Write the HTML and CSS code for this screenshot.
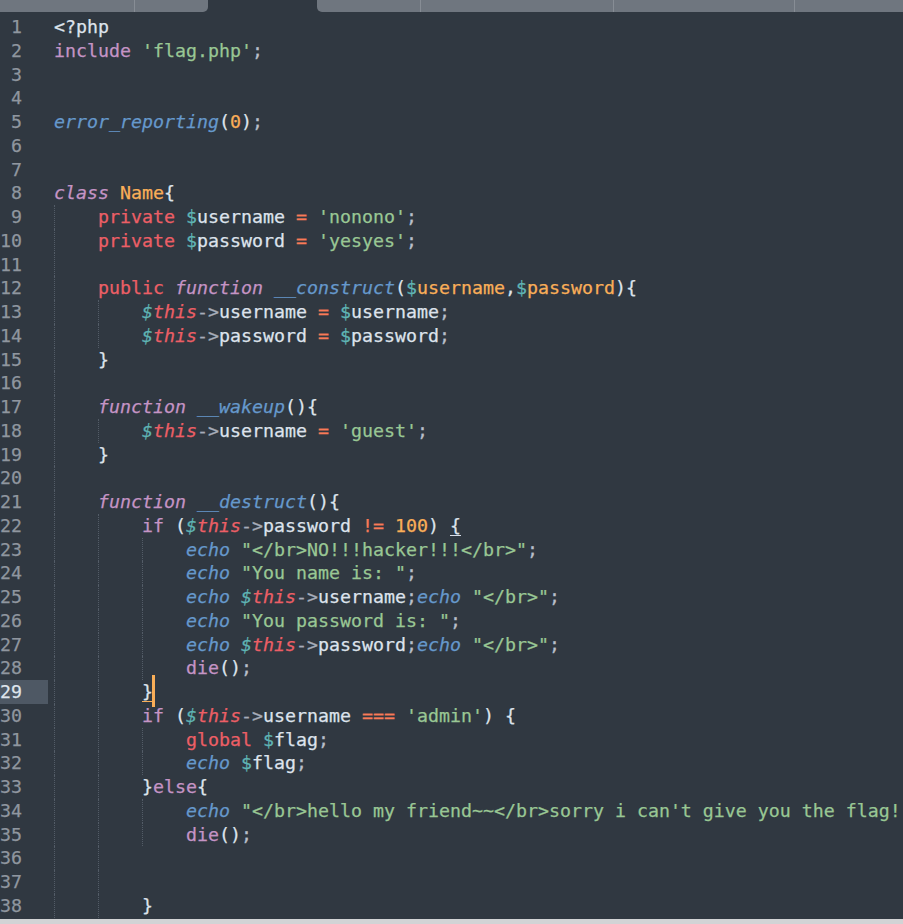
FILE: index.html
```html
<!DOCTYPE html>
<html lang="en">
<head>
    <meta charset="UTF-8">
    <meta name="viewport" content="width=device-width, initial-scale=1.0">
    <title>index.php</title>
    <link rel="stylesheet" href="styles.css">
</head>
<body>
    <div class="window">
        <div class="tabs">
            <div class="tab" style="width: 134px"></div>
            <div class="tab sep before" style="width: 74px"></div>
            <div class="tab active" style="width: 109px"></div>
            <div class="tab after" style="width: 103px"></div>
            <div class="tab sep" style="width: 193px"></div>
            <div class="tab sep" style="width: 181px"></div>
            <div class="tab sep grow"></div>
        </div>

        <div class="editor">
            <div class="ln"><span class="num">1</span><span class="code"><span class="w">&lt;?php</span></span></div>
            <div class="ln"><span class="num">2</span><span class="code"><span class="k">include</span> <span class="s">'flag.php'</span><span class="p">;</span></span></div>
            <div class="ln"><span class="num">3</span><span class="code"></span></div>
            <div class="ln"><span class="num">4</span><span class="code"></span></div>
            <div class="ln"><span class="num">5</span><span class="code"><span class="f">error_reporting</span><span class="w">(</span><span class="n">0</span><span class="w">)</span><span class="p">;</span></span></div>
            <div class="ln"><span class="num">6</span><span class="code"></span></div>
            <div class="ln"><span class="num">7</span><span class="code"></span></div>
            <div class="ln"><span class="num">8</span><span class="code"><span class="k i">class</span> <span class="n">Name</span><span class="w">{</span></span></div>
            <div class="ln"><span class="num">9</span><span class="code"><i class="g"></i><span class="r">private</span> <span class="d">$</span><span class="w">username</span> <span class="o">=</span> <span class="s">'nonono'</span><span class="p">;</span></span></div>
            <div class="ln"><span class="num">10</span><span class="code"><i class="g"></i><span class="r">private</span> <span class="d">$</span><span class="w">password</span> <span class="o">=</span> <span class="s">'yesyes'</span><span class="p">;</span></span></div>
            <div class="ln"><span class="num">11</span><span class="code"><i class="g"></i></span></div>
            <div class="ln"><span class="num">12</span><span class="code"><i class="g"></i><span class="r">public</span> <span class="k i">function</span> <span class="f">__construct</span><span class="w">(</span><span class="d">$</span><span class="n">username</span><span class="w">,</span><span class="d">$</span><span class="n">password</span><span class="w">){</span></span></div>
            <div class="ln"><span class="num">13</span><span class="code"><i class="g"></i><i class="g"></i><span class="d i">$</span><span class="r i">this</span><span class="a">-&gt;</span><span class="w">username</span> <span class="o">=</span> <span class="d">$</span><span class="w">username</span><span class="p">;</span></span></div>
            <div class="ln"><span class="num">14</span><span class="code"><i class="g"></i><i class="g"></i><span class="d i">$</span><span class="r i">this</span><span class="a">-&gt;</span><span class="w">password</span> <span class="o">=</span> <span class="d">$</span><span class="w">password</span><span class="p">;</span></span></div>
            <div class="ln"><span class="num">15</span><span class="code"><i class="g"></i><span class="w">}</span></span></div>
            <div class="ln"><span class="num">16</span><span class="code"><i class="g"></i></span></div>
            <div class="ln"><span class="num">17</span><span class="code"><i class="g"></i><span class="k i">function</span> <span class="f">__wakeup</span><span class="w">(){</span></span></div>
            <div class="ln"><span class="num">18</span><span class="code"><i class="g"></i><i class="g"></i><span class="d i">$</span><span class="r i">this</span><span class="a">-&gt;</span><span class="w">username</span> <span class="o">=</span> <span class="s">'guest'</span><span class="p">;</span></span></div>
            <div class="ln"><span class="num">19</span><span class="code"><i class="g"></i><span class="w">}</span></span></div>
            <div class="ln"><span class="num">20</span><span class="code"><i class="g"></i></span></div>
            <div class="ln"><span class="num">21</span><span class="code"><i class="g"></i><span class="k i">function</span> <span class="f">__destruct</span><span class="w">(){</span></span></div>
            <div class="ln"><span class="num">22</span><span class="code"><i class="g"></i><i class="g"></i><span class="k">if</span> <span class="w">(</span><span class="d i">$</span><span class="r i">this</span><span class="a">-&gt;</span><span class="w">password</span> <span class="o">!=</span> <span class="n">100</span><span class="w">)</span> <span class="w match">{</span></span></div>
            <div class="ln"><span class="num">23</span><span class="code"><i class="g"></i><i class="g"></i><i class="g"></i><span class="f">echo</span> <span class="s">"&lt;/br&gt;NO!!!hacker!!!&lt;/br&gt;"</span><span class="p">;</span></span></div>
            <div class="ln"><span class="num">24</span><span class="code"><i class="g"></i><i class="g"></i><i class="g"></i><span class="f">echo</span> <span class="s">"You name is: "</span><span class="p">;</span></span></div>
            <div class="ln"><span class="num">25</span><span class="code"><i class="g"></i><i class="g"></i><i class="g"></i><span class="f">echo</span> <span class="d i">$</span><span class="r i">this</span><span class="a">-&gt;</span><span class="w">username</span><span class="p">;</span><span class="f">echo</span> <span class="s">"&lt;/br&gt;"</span><span class="p">;</span></span></div>
            <div class="ln"><span class="num">26</span><span class="code"><i class="g"></i><i class="g"></i><i class="g"></i><span class="f">echo</span> <span class="s">"You password is: "</span><span class="p">;</span></span></div>
            <div class="ln"><span class="num">27</span><span class="code"><i class="g"></i><i class="g"></i><i class="g"></i><span class="f">echo</span> <span class="d i">$</span><span class="r i">this</span><span class="a">-&gt;</span><span class="w">password</span><span class="p">;</span><span class="f">echo</span> <span class="s">"&lt;/br&gt;"</span><span class="p">;</span></span></div>
            <div class="ln"><span class="num">28</span><span class="code"><i class="g"></i><i class="g"></i><i class="g"></i><span class="k">die</span><span class="w">()</span><span class="p">;</span></span></div>
            <div class="ln current"><span class="num">29</span><span class="code"><i class="g"></i><i class="g"></i><span class="w match caret-match">}</span><span class="caret"></span></span></div>
            <div class="ln"><span class="num">30</span><span class="code"><i class="g"></i><i class="g"></i><span class="k">if</span> <span class="w">(</span><span class="d i">$</span><span class="r i">this</span><span class="a">-&gt;</span><span class="w">username</span> <span class="o">===</span> <span class="s">'admin'</span><span class="w">)</span> <span class="w">{</span></span></div>
            <div class="ln"><span class="num">31</span><span class="code"><i class="g"></i><i class="g"></i><i class="g"></i><span class="r">global</span> <span class="d">$</span><span class="w">flag</span><span class="p">;</span></span></div>
            <div class="ln"><span class="num">32</span><span class="code"><i class="g"></i><i class="g"></i><i class="g"></i><span class="f">echo</span> <span class="d">$</span><span class="w">flag</span><span class="p">;</span></span></div>
            <div class="ln"><span class="num">33</span><span class="code"><i class="g"></i><i class="g"></i><span class="w">}</span><span class="k">else</span><span class="w">{</span></span></div>
            <div class="ln"><span class="num">34</span><span class="code"><i class="g"></i><i class="g"></i><i class="g"></i><span class="f">echo</span> <span class="s">"&lt;/br&gt;hello my friend~~&lt;/br&gt;sorry i can't give you the flag!</span></span></div>
            <div class="ln"><span class="num">35</span><span class="code"><i class="g"></i><i class="g"></i><i class="g"></i><span class="k">die</span><span class="w">()</span><span class="p">;</span></span></div>
            <div class="ln"><span class="num">36</span><span class="code"><i class="g"></i><i class="g"></i></span></div>
            <div class="ln"><span class="num">37</span><span class="code"><i class="g"></i><i class="g"></i></span></div>
            <div class="ln"><span class="num">38</span><span class="code"><i class="g"></i><i class="g"></i><span class="w">}</span></span></div>
        </div>

        <div class="hscroll"></div>
    </div>
</body>
</html>
```

FILE: styles.css
```css
* {
    margin: 0;
    padding: 0;
    box-sizing: border-box;
}

body {
    background: #303841;
    width: 903px;
    height: 924px;
    overflow: hidden;
}

.window {
    height: 924px;
    display: flex;
    flex-direction: column;
    background: #303841;
}

/* tab strip */
.tabs {
    display: flex;
    height: 12px;
    flex-shrink: 0;
}

.tab {
    background: #6f767f;
    height: 100%;
}

.tab.sep {
    border-left: 1px solid #878d95;
}

.tab.grow {
    flex: 1;
}

.tab.before {
    border-bottom-right-radius: 5px;
}

.tab.after {
    border-bottom-left-radius: 5px;
}

.tab.active {
    background: #303841;
}

/* editor */
.editor {
    flex: 1;
    padding-top: 3px;
    font-family: "DejaVu Sans Mono", "Liberation Mono", monospace;
    font-size: 18.27px;
    color: #d8dee9;
    -webkit-text-stroke: 0.25px currentColor;
    overflow: hidden;
}

.ln {
    display: flex;
    height: 23.75px;
    line-height: 23.75px;
    white-space: pre;
}

.num {
    width: 48px;
    flex-shrink: 0;
    padding-right: 26px;
    text-align: right;
    color: #8f969f;
}

.ln.current .num {
    background: #4e5864;
    color: #dfe4ec;
}

.code {
    margin-left: 6px;
    white-space: pre;
}

/* indent guides */
.g {
    display: inline-block;
    width: 44px;
    height: 23.75px;
    vertical-align: top;
    border-left: 1px dotted #535c67;
}

/* syntax colours */
.w { color: #dde3ec; }
.p { color: #b8bfca; }
.a { color: #a6acb9; }
.k { color: #c594c5; }
.r { color: #ec5f66; }
.f { color: #6699cc; font-style: italic; }
.s { color: #99c794; }
.n { color: #f9ae58; }
.o { color: #f97b58; }
.d { color: #5fb4b4; }
.i { font-style: italic; }

.match {
    box-shadow: inset 0 -1px #d8dee9;
}

.caret-match {
    box-shadow: inset 0 -1px #f9ae58;
}

.caret {
    display: inline-block;
    width: 0;
    height: 23.75px;
    vertical-align: top;
    position: relative;
}

.caret::after {
    content: "";
    position: absolute;
    left: -1px;
    top: -5px;
    width: 3px;
    height: 32px;
    background: #f9ae58;
}

.hscroll {
    height: 5px;
    flex-shrink: 0;
    background: #d2d3d5;
}
```
